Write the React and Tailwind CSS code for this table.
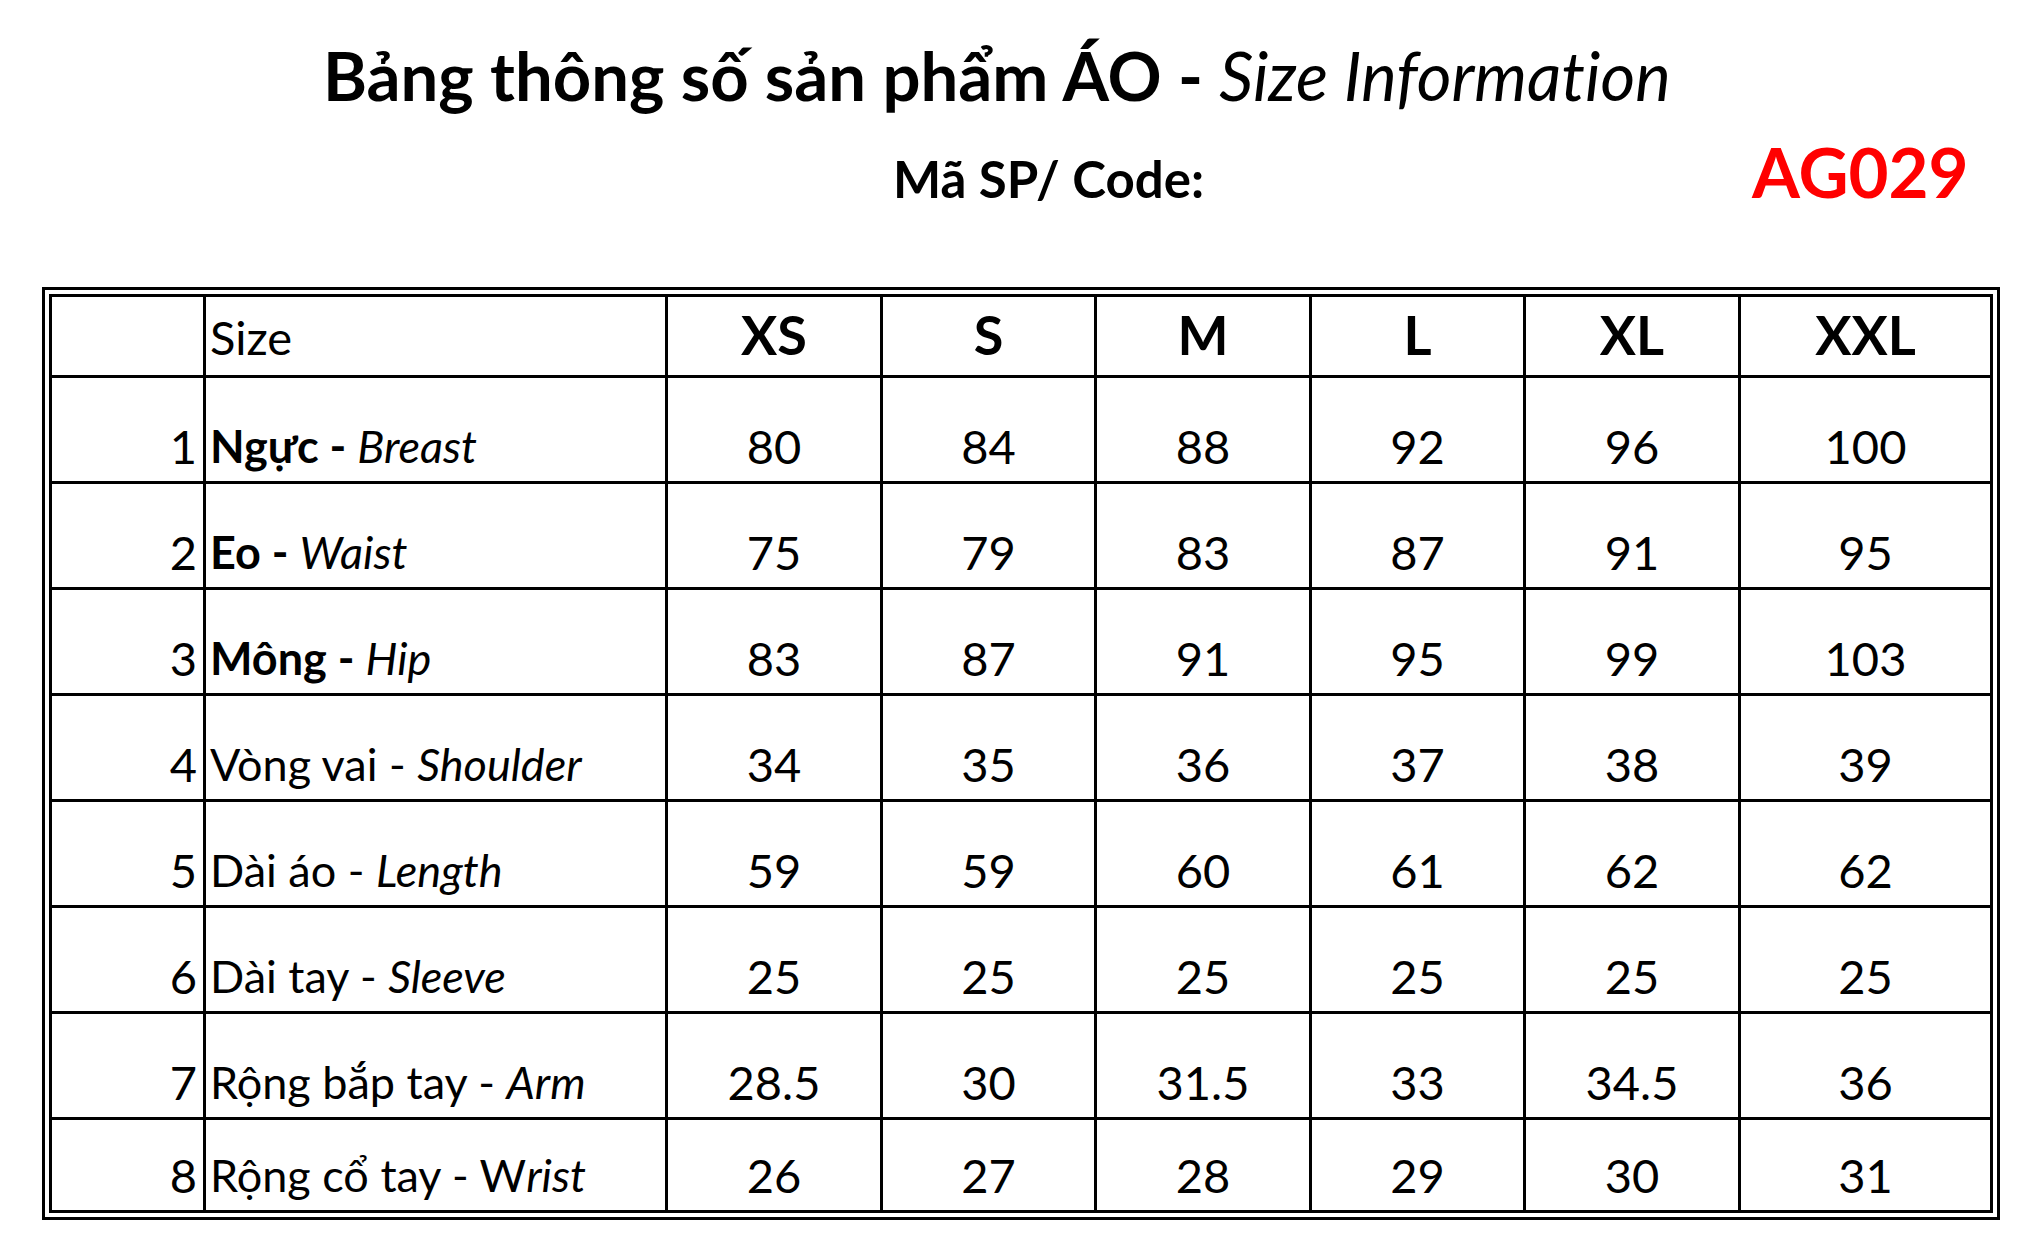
import React from 'react';

const sizes = ['XS', 'S', 'M', 'L', 'XL', 'XXL'];

// label parts: [text, style] where style is 'b' bold, 'i' italic, '' normal
const rows = [
  { n: 1, label: [['Ngực - ', 'b'], ['Breast', 'i']], values: ['80', '84', '88', '92', '96', '100'] },
  { n: 2, label: [['Eo - ', 'b'], ['Waist', 'i']], values: ['75', '79', '83', '87', '91', '95'] },
  { n: 3, label: [['Mông - ', 'b'], ['Hip', 'i']], values: ['83', '87', '91', '95', '99', '103'] },
  { n: 4, label: [['Vòng vai - ', ''], ['Shoulder', 'i']], values: ['34', '35', '36', '37', '38', '39'] },
  { n: 5, label: [['Dài áo - ', ''], ['Length', 'i']], values: ['59', '59', '60', '61', '62', '62'] },
  { n: 6, label: [['Dài tay - ', ''], ['Sleeve', 'i']], values: ['25', '25', '25', '25', '25', '25'] },
  { n: 7, label: [['Rộng bắp tay - ', ''], ['Arm', 'i']], values: ['28.5', '30', '31.5', '33', '34.5', '36'] },
  { n: 8, label: [['Rộng cổ tay - W', ''], ['rist', 'i']], values: ['26', '27', '28', '29', '30', '31'] },
];

function Part({ text, kind }) {
  if (kind === 'b') return <span className="font-bold">{text}</span>;
  if (kind === 'i') return <span className="italic">{text}</span>;
  return <span>{text}</span>;
}

export default function App() {
  return (
    <div className="w-[2040px] h-[1258px] bg-white text-black font-['Lato',sans-serif] [font-variant-ligatures:none] overflow-hidden">
      {/* Heading */}
      <div className="pt-[42px] pl-[323px] text-[67px] leading-none whitespace-nowrap">
        <span className="font-bold">Bảng thông số sản phẩm ÁO - </span>
        <span className="italic">Size Information</span>
      </div>
      <div className="mt-[28px] flex items-baseline pl-[893px] whitespace-nowrap">
        <div className="w-[859px] text-[51px] font-bold leading-none">Mã SP/ Code:</div>
        <div className="text-[69px] font-bold leading-none text-[#ff0000]">AG029</div>
      </div>

      {/* Table */}
      <div className="mt-[81px] ml-[42px] w-fit border-[3px] border-black p-[4px]">
        <div className="grid grid-cols-[151px_459px_212px_211px_212px_211px_212px_249px] grid-rows-[78px_103px_103px_103px_103px_103px_103px_103px_90px] gap-[3px] border-[3px] border-black bg-black text-[47px] leading-none">
          <div className="bg-white" />
          <div className="bg-white flex items-end pl-[4px] pb-[14px]">Size</div>
          {sizes.map((s) => (
            <div key={s} className="bg-white flex items-end justify-center pb-[13px] text-[54px] font-bold">
              {s}
            </div>
          ))}

          {rows.map((r) => (
            <React.Fragment key={r.n}>
              <div className="bg-white flex items-end justify-end pr-[6px] pb-[11px]">{r.n}</div>
              <div className="bg-white flex items-end pl-[4px] pb-[12px] text-[45px] whitespace-pre">
                <span>
                  {r.label.map(([t, k], i) => (
                    <Part key={i} text={t} kind={k} />
                  ))}
                </span>
              </div>
              {r.values.map((v, i) => (
                <div key={i} className="bg-white flex items-end justify-center pb-[11px]">
                  {v}
                </div>
              ))}
            </React.Fragment>
          ))}
        </div>
      </div>
    </div>
  );
}
